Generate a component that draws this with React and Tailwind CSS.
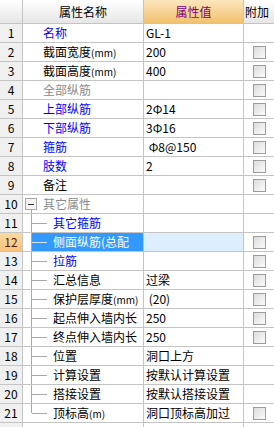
import React from "react";

const rows = [
  { name: "名称", value: "GL-1", color: "blue", check: false },
  { name: "截面宽度", unit: "(mm)", value: "200", check: true },
  { name: "截面高度", unit: "(mm)", value: "400", check: true },
  { name: "全部纵筋", value: "", color: "gray", check: true },
  { name: "上部纵筋", value: "2Φ14", color: "blue", check: true },
  { name: "下部纵筋", value: "3Φ16", color: "blue", check: true },
  { name: "箍筋", value: " Φ8@150", color: "blue", check: true },
  { name: "肢数", value: "2", color: "blue", check: true },
  { name: "备注", value: "", check: true },
  { name: "其它属性", value: "", color: "gray", group: true },
  { name: "其它箍筋", value: "", color: "blue", child: true },
  { name: "侧面纵筋(总配", value: "", color: "blue", child: true, check: true, selected: true },
  { name: "拉筋", value: "", color: "blue", child: true, check: true },
  { name: "汇总信息", value: "过梁", child: true, check: true },
  { name: "保护层厚度", unit: "(mm)", value: " (20)", child: true, check: true },
  { name: "起点伸入墙内长", value: "250", child: true, check: true },
  { name: "终点伸入墙内长", value: "250", child: true, check: true },
  { name: "位置", value: "洞口上方", child: true },
  { name: "计算设置", value: "按默认计算设置", child: true },
  { name: "搭接设置", value: "按默认搭接设置", child: true },
  { name: "顶标高", unit: "(m)", value: "洞口顶标高加过", child: true, check: true, last: true },
];

const font = { fontFamily: '"Noto Sans CJK SC", "Liberation Sans", sans-serif' };

const Checkbox = () => (
  <div className="h-[13px] w-[13px] border border-[#9c9c9c] bg-gradient-to-br from-[#dcdcdc] to-[#fbfbfb]" />
);

const nameColor = (c) =>
  c === "blue" ? "text-[#0000ff]" : c === "gray" ? "text-[#8a8a8a]" : "text-black";

const Row = ({ row, index }) => {
  const sel = row.selected;
  return (
    <div className="grid h-[19px] grid-cols-[23px_121px_100px_30px] border-b border-[#c4c4c4]">
      <div
        className={`flex items-center justify-center border-r border-[#c4c4c4] text-[12px] ${
          sel ? "bg-gradient-to-b from-[#fbd9a3] to-[#f5c37a] text-[#5a1a00]" : "bg-[#f0f0f0] text-black"
        }`}
      >
        {index + 1}
      </div>
      <div className="flex min-w-0 items-stretch overflow-hidden border-r border-[#c4c4c4] bg-white">
        {row.child ? (
          <>
            <div className="w-[8px] shrink-0" />
            <div className={`w-[1px] shrink-0 bg-[#a8a8a8] ${row.last ? "h-[9px]" : ""}`} />
            <div
              className={`flex min-w-0 flex-1 items-center whitespace-nowrap ${
                sel ? "bg-[#3399ff] text-white" : nameColor(row.color)
              }`}
            >
              <div className={`mr-[6px] h-[1px] w-[15px] shrink-0 ${sel ? "bg-[#cfe6ff]" : "bg-[#a8a8a8]"}`} />
              <span className="text-[12px] leading-[18px]">
                {row.name}
                {row.unit && <span className="text-[10px]">{row.unit}</span>}
              </span>
            </div>
          </>
        ) : row.group ? (
          <div className="flex items-stretch whitespace-nowrap">
            <div className="ml-[2px] flex w-[12px] flex-col items-center">
              <div className="h-[3px]" />
              <div className="flex h-[12px] w-[12px] items-center justify-center border border-[#a8a8a8] bg-[#f4f4f4]">
                <div className="h-[1px] w-[6px] bg-[#333]" />
              </div>
              <div className="w-[1px] flex-1 bg-[#a8a8a8]" />
            </div>
            <span className={`ml-[6px] text-[12px] leading-[18px] ${nameColor(row.color)}`}>{row.name}</span>
          </div>
        ) : (
          <div className={`flex items-center whitespace-nowrap pl-[20px] ${nameColor(row.color)}`}>
            <span className="text-[12px] leading-[18px]">
              {row.name}
              {row.unit && <span className="text-[10px]">{row.unit}</span>}
            </span>
          </div>
        )}
      </div>
      <div
        className={`flex items-center overflow-hidden whitespace-pre border-r border-[#c4c4c4] pl-[2px] text-[12px] leading-[18px] text-black ${
          sel ? "bg-[#ddeeff]" : "bg-white"
        }`}
      >
        {row.value}
      </div>
      <div className="flex items-center justify-center bg-white">{row.check && <Checkbox />}</div>
    </div>
  );
};

export default function App() {
  return (
    <div className="h-[427px] w-[274px] overflow-hidden bg-white" style={font}>
      <div className="grid h-[24px] grid-cols-[23px_121px_100px_30px] border-b border-[#c4c4c4] text-[12px] leading-[23px]">
        <div className="border-r border-[#c4c4c4] bg-gradient-to-b from-[#ffffff] to-[#e6e6e6]" />
        <div className="border-r border-[#c4c4c4] bg-gradient-to-b from-[#ffffff] to-[#e6e6e6] text-center text-black">
          属性名称
        </div>
        <div className="border-r border-[#c4c4c4] bg-gradient-to-b from-[#fce6bd] to-[#f2c16b] text-center text-[#800080]">
          属性值
        </div>
        <div className="bg-gradient-to-b from-[#ffffff] to-[#e6e6e6] pl-[1px] text-black">附加</div>
      </div>
      {rows.map((row, i) => (
        <Row key={i} row={row} index={i} />
      ))}
      <div className="grid h-[10px] grid-cols-[23px_121px_100px_30px]">
        <div className="border-r border-[#c4c4c4] bg-[#f0f0f0]" />
        <div className="border-r border-[#c4c4c4]" />
        <div className="border-r border-[#c4c4c4]" />
        <div />
      </div>
    </div>
  );
}
